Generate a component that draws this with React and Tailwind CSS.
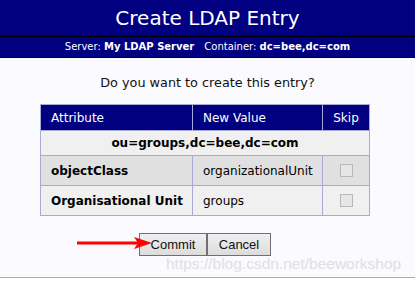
import React from "react";

export default function App() {
  const verdana = { fontFamily: '"DejaVu Sans", Verdana, sans-serif' };
  return (
    <div className="relative w-[415px] h-[288px] bg-[#fafaff] overflow-hidden" style={verdana}>
      <div className="h-[37px] bg-[#000080] border-b border-black flex items-center justify-center">
        <span className="text-white text-[20px] leading-none">Create LDAP Entry</span>
      </div>
      <div className="h-[21px] bg-[#000080] border-b border-black flex items-center justify-center text-white text-[10px] leading-none">
        <span>Server: <b>My LDAP Server</b></span>
        <span className="ml-[10px]">Container: <b>dc=bee,dc=com</b></span>
      </div>
      <div className="h-[46px] flex items-center justify-center text-[12.8px] text-[#111] pt-[3px]">
        Do you want to create this entry?
      </div>
      <table className="ml-[40px] w-[330px] border-collapse text-[12px] text-black">
        <thead>
          <tr className="bg-[#000080] text-white h-[26px]">
            <th className="border border-[#a9a9d6] text-left font-normal pl-[10px] w-[152px]">Attribute</th>
            <th className="border border-[#a9a9d6] text-left font-normal pl-[10px] w-[130px]">New Value</th>
            <th className="border border-[#a9a9d6] font-normal">Skip</th>
          </tr>
        </thead>
        <tbody>
          <tr className="bg-[#f0f0f0] h-[25px]">
            <td colSpan={3} className="border border-[#a9a9d6] text-center font-bold">ou=groups,dc=bee,dc=com</td>
          </tr>
          <tr className="bg-[#e0e0e0] h-[30px]">
            <td className="border border-[#a9a9d6] font-bold pl-[10px]">objectClass</td>
            <td className="border border-[#a9a9d6] pl-[10px]">organizationalUnit</td>
            <td className="border border-[#a9a9d6]">
              <div className="mx-auto w-[13px] h-[13px] border border-[#b8b8b8] bg-[#e6e6e6]" />
            </td>
          </tr>
          <tr className="bg-[#f0f0f0] h-[30px]">
            <td className="border border-[#a9a9d6] font-bold pl-[10px]">Organisational Unit</td>
            <td className="border border-[#a9a9d6] pl-[10px]">groups</td>
            <td className="border border-[#a9a9d6]">
              <div className="mx-auto w-[13px] h-[13px] border border-[#b8b8b8] bg-[#e6e6e6]" />
            </td>
          </tr>
        </tbody>
      </table>
      <div className="mt-[17px] flex pl-[139px]" style={{ fontFamily: '"Liberation Sans", Arial, sans-serif' }}>
        <button className="w-[68px] h-[23px] border border-[#707070] bg-gradient-to-b from-[#f0f0f0] to-[#dcdcdc] text-[13px] text-[#111]">Commit</button>
        <button className="w-[64px] h-[23px] border border-[#707070] bg-gradient-to-b from-[#f0f0f0] to-[#dcdcdc] text-[13px] text-[#111]">Cancel</button>
      </div>
      <div className="mt-[21px] h-px bg-[#aaa6c4]" />
      <div className="h-[12px] bg-white" />
      <svg className="absolute left-[76px] top-[236px]" width="80" height="14" viewBox="0 0 80 14">
        <line x1="1" y1="7" x2="62" y2="7" stroke="#f00" strokeWidth="3" />
        <polygon points="58,1 76,7 58,13 62,7" fill="#f00" />
      </svg>
      <div
        className="absolute left-[166px] top-[256px] text-[15.5px] text-[#e0e0e0] leading-none"
        style={{ fontFamily: '"Liberation Sans", Arial, sans-serif' }}
      >
        https://blog.csdn.net/beeworkshop
      </div>
    </div>
  );
}
